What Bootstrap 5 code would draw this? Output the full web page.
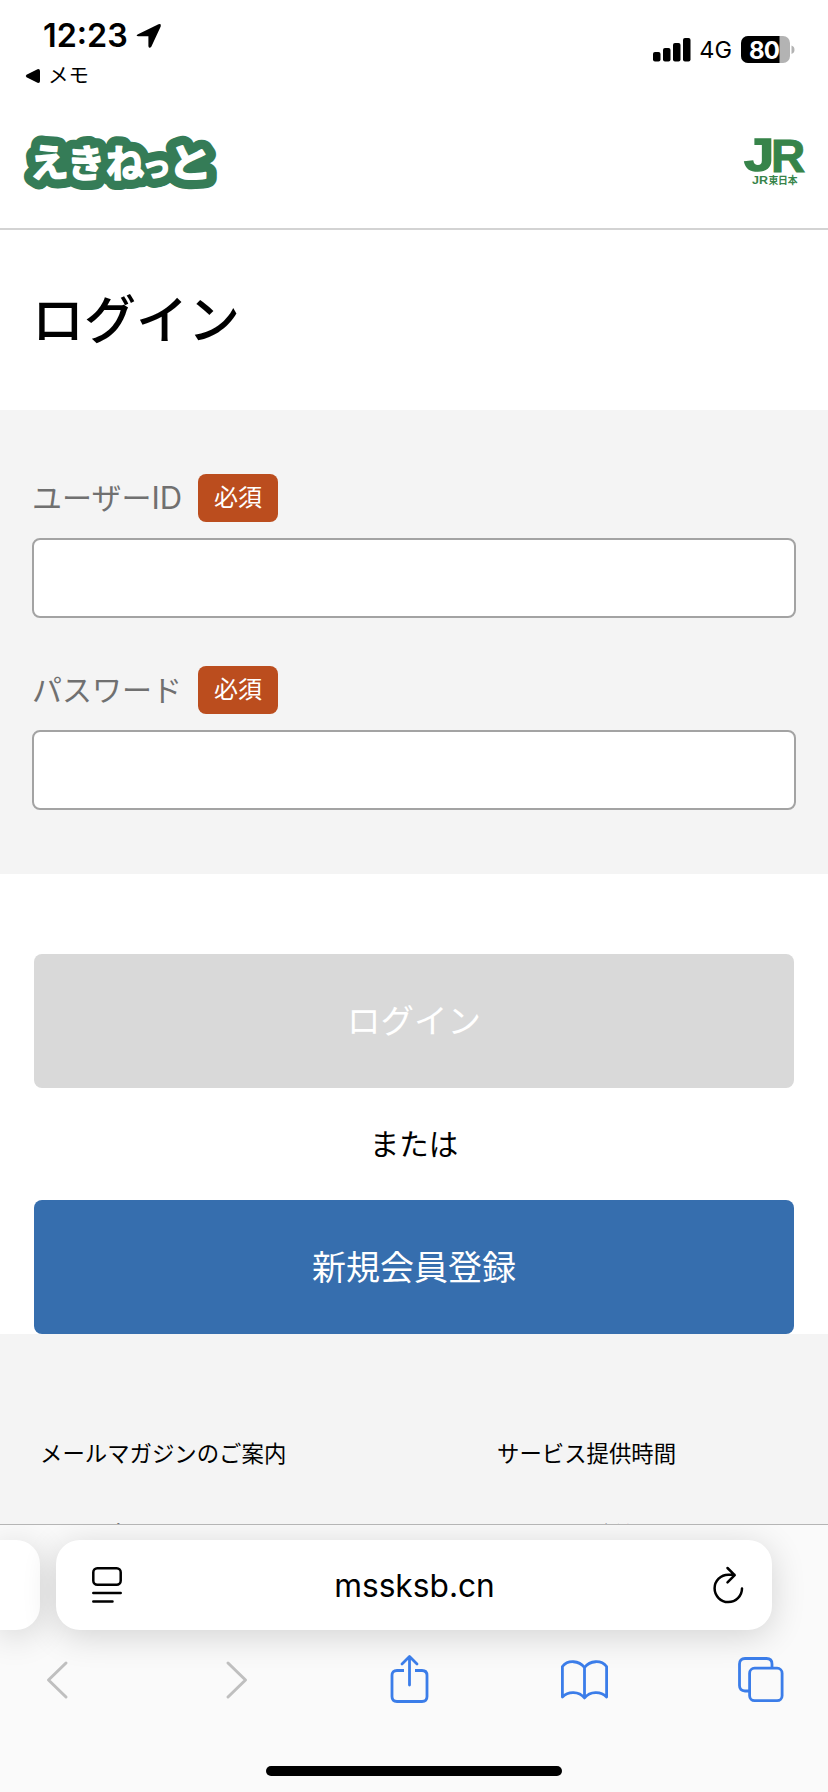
<!DOCTYPE html>
<html lang="ja">
<head>
<meta charset="utf-8">
<meta name="viewport" content="width=device-width, initial-scale=1">
<title>ログイン</title>
<link href="https://cdn.jsdelivr.net/npm/bootstrap@5.3.0/dist/css/bootstrap.min.css" rel="stylesheet">
<style>
body{font-family:"Noto Sans CJK JP",sans-serif;color:#000;background:#fff;height:1792px}
svg{display:block;flex:none;overflow:visible}
.latin{font-family:Inter,"Noto Sans CJK JP",sans-serif}
.status{height:98px;padding:19px 33px 0 25px}
.clock{font-size:32.3px;font-weight:600;line-height:34px;padding-left:18px}
.back-app{font-size:20.5px;line-height:24px;margin-top:11px;font-weight:400}
.signal{margin-top:17px;height:28px}
.net{font-size:23.5px;line-height:28px;margin-left:8px}
.site-head{height:132px;border-bottom:2px solid #d3d3d3;padding:0 23px}
.page-title{height:180px;padding:0 0 6px 32px;font-size:52px;line-height:1;font-weight:500}
.form-area{background:#f4f4f4;height:464px;padding:64px 32px 0}
.field-label{font-size:30px;line-height:45px;height:48px;width:149px;color:#707070;white-space:nowrap}
.field-label .latin{font-size:31px}
.need{width:80px;height:48px;border-radius:8px;background:#bb4d1e;color:#fff;font-size:24px;line-height:44px;font-weight:400;padding:0;margin-left:17px}
.form-control.entry{height:80px;border:2px solid #a3a3a3;border-radius:8px;margin:16px 0 48px;background:#fff}
.actions{padding:80px 34px 0}
.btn.wide{height:134px;border:0;border-radius:8px;font-size:34px;color:#fff;opacity:1;line-height:1;padding:0 0 3px}
.btn.login{background:#d9d9d9;font-size:33.5px;padding-bottom:5px}
.btn.join{background:#366eae}
.or-text{height:112px;font-size:29.5px;line-height:108px}
.foot{background:#f4f4f4;height:190px;padding:102px 0 0 40px;font-size:22.4px;line-height:32px;overflow:hidden}
.foot .cell-a{width:457px}
.foot .line{margin-bottom:49px}
.browser{height:268px;background:#fafafa;border-top:1px solid #b5b5b5;overflow:hidden}
.tabs{padding-top:15px;gap:16px}
.tab-prev,.tab-now{height:90px;background:#fff;box-shadow:0 6px 34px rgba(0,0,0,.16)}
.tab-prev{width:40px;border-radius:0 24px 24px 0}
.tab-now{width:716px;border-radius:24px;padding:0 27px 0 36px}
.url{font-size:31.7px;line-height:90px;padding:1px 4px 0 0;color:#000}
.tools{display:grid;grid-template-columns:180px 164px 170px 178px auto;padding:24px 0 0 46px;height:82px}
.home-bar{width:296px;height:10px;border-radius:5px;background:#000;margin:54px auto 0}
</style>
</head>
<body class="d-flex flex-column overflow-hidden">
<header class="status latin d-flex justify-content-between flex-shrink-0">
  <div>
    <div class="clock d-flex align-items-center"><span>12:23</span>
      <svg class="ms-2" width="26" height="26" viewBox="0 0 26 26"><path d="M2 11.300 22.500 1.300Q25.600.4 24.700 3.500L15.300 23.800Q13.200 26.200 12.400 23.200V13.300H2.400Q-.9 13.200 2 11.300Z"/></svg>
    </div>
    <div class="back-app d-flex align-items-center"><svg width="16" height="16" viewBox="0 0 16 16" style="margin-right:7px"><path d="M1.500 6.800 12.500 1.200Q15 .7 15 3V13Q15 15.300 12.500 14.800L1.500 9.200Q0 8 1.500 6.800Z"/></svg>メモ</div>
  </div>
  <div class="signal d-flex align-items-center">
    <svg width="38" height="24" viewBox="0 0 38 24"><rect x="0" y="14" width="7.500" height="9.500" rx="2"/><rect x="10" y="10" width="7.500" height="13.500" rx="2"/><rect x="20" y="5" width="7.500" height="18.500" rx="2"/><rect x="30" y="0" width="7.500" height="23.500" rx="2"/></svg>
    <span class="net">4G</span>
    <svg width="54" height="28" viewBox="0 0 54 28" style="margin-left:9px"><defs><clipPath id="bat"><rect width="49" height="27" rx="7"/></clipPath></defs><g clip-path="url(#bat)"><rect width="49" height="27" fill="#b3b3b3"/><rect width="38.500" height="27"/></g><path d="M50.500 9.500Q53.500 10.500 53.500 13.800T50.500 18Z" fill="#b3b3b3"/><text x="8" y="22.500" font-size="24" font-weight="700" fill="#fff" textLength="31">80</text></svg>
  </div>
</header>
<div class="site-head d-flex justify-content-between flex-shrink-0">
  <svg width="196" height="60" viewBox="0 0 196 60" style="margin-top:34px" role="img" aria-label="えきねっと" font-family="Noto Sans CJK JP" font-weight="700" stroke-linejoin="round">
    <g fill="#357c57" stroke="#357c57" stroke-width="20"><use href="#word"/></g>
    <g fill="#fff" stroke="#fff" stroke-width="1.600">
      <g id="word">
        <text font-size="39" transform="translate(7 45.500) rotate(-2)">え</text><text font-size="38" transform="translate(44 45)">き</text><text font-size="38" transform="translate(83 45)">ね</text><text font-size="29" transform="translate(119 45)">っ</text><text font-size="39" transform="translate(145 45) scale(1.130 1)">と</text>
      </g>
    </g>
  </svg>
  <svg width="61" height="50" viewBox="0 0 61 50" style="margin-top:39px" fill="#37844a" stroke="#37844a" font-family="Liberation Sans" font-weight="700">
    <text transform="translate(0 34.200) scale(1.180 1)" font-size="46" stroke-width="1.400">J</text>
    <text transform="translate(27 34.500) scale(1.030 1)" font-size="46" stroke-width="1">R</text>
    <text x="8" y="46.500" font-size="10.500" stroke="none" textLength="16" lengthAdjust="spacingAndGlyphs">JR</text><text x="24.500" y="46.500" font-size="9.800" stroke="none" font-family="Noto Sans CJK JP" textLength="29">東日本</text>
  </svg>
</div>
<main class="flex-shrink-0">
  <h1 class="page-title d-flex align-items-center mb-0">ログイン</h1>
  <section class="form-area">
    <div class="d-flex align-items-center"><label class="field-label" for="uid">ユーザー<span class="latin">ID</span></label><span class="badge need">必須</span></div>
    <input id="uid" class="form-control entry" type="text">
    <div class="d-flex align-items-center"><label class="field-label" for="pwd">パスワード</label><span class="badge need">必須</span></div>
    <input id="pwd" class="form-control entry" type="password">
  </section>
  <section class="actions">
    <button class="btn wide login w-100" disabled>ログイン</button>
    <div class="or-text text-center">または</div>
    <button class="btn wide join w-100 d-block">新規会員登録</button>
  </section>
  <section class="foot d-flex">
    <div class="cell-a"><div class="line">メールマガジンのご案内</div><div>お問い合わせ</div></div>
    <div><div class="line">サービス提供時間</div><div>よくあるご質問</div></div>
  </section>
</main>
<footer class="browser flex-shrink-0 latin">
  <div class="tabs d-flex">
    <div class="tab-prev"></div>
    <div class="tab-now d-flex align-items-center justify-content-between">
      <svg width="30" height="36" viewBox="0 0 30 36" fill="none" stroke="#000" stroke-width="2.500" stroke-linecap="round"><rect x="1.300" y="1.300" width="27.400" height="16.500" rx="4"/><path d="M1.300 26H28.700M1.300 34.500H20.500"/></svg>
      <span class="url">mssksb.cn</span>
      <svg width="34" height="38" viewBox="0 0 34 38" fill="none" stroke="#000" stroke-width="2.500" stroke-linecap="round" stroke-linejoin="round"><path d="M31 22.500A13.700 13.700 0 1 1 17.300 8.700H23.500M16.500 2 23.700 9.200 16.500 16.400"/></svg>
    </div>
  </div>
  <div class="tools">
    <svg width="22" height="38" viewBox="0 0 22 38" fill="none" stroke="#bfbfbf" stroke-width="3" stroke-linecap="round" stroke-linejoin="round" style="margin-top:7px"><path d="M20 2 2.500 19 20 36"/></svg>
    <svg width="22" height="38" viewBox="0 0 22 38" fill="none" stroke="#bfbfbf" stroke-width="3" stroke-linecap="round" stroke-linejoin="round" style="margin-top:7px"><path d="M2 2 19.500 19 2 36"/></svg>
    <svg width="40" height="50" viewBox="0 0 40 50" fill="none" stroke="#3b7de9" stroke-width="2.800" stroke-linecap="round" stroke-linejoin="round"><path d="M19.500 31V3M12 10 19.500 2.500 27 10"/><path stroke-linecap="butt" d="M14 16.500H7Q2 16.500 2 21.500V42.500Q2 47.500 7 47.500H32Q37 47.500 37 42.500V21.500Q37 16.500 32 16.500H25"/></svg>
    <svg width="50" height="42" viewBox="0 0 50 42" fill="none" stroke="#3b7de9" stroke-width="2.800" stroke-linejoin="round" style="margin-top:5px"><path d="M24.500 8.500C19 1.500 8 .5 2.400 7.500V38C8 32 19 32 24.500 39 30 32 41 32 46.600 38V7.500C41 .5 30 1.500 24.500 8.500V38"/></svg>
    <svg width="46" height="46" viewBox="0 0 46 46" fill="none" stroke="#3b7de9" stroke-width="2.800" style="margin-top:3px"><path d="M12 34H7Q1.500 34 1.500 28.500V7Q1.500 1.500 7 1.500H28.500Q34 1.500 34 7V11"/><rect x="11.600" y="11.200" width="32.500" height="32.500" rx="5"/></svg>
  </div>
  <div class="home-bar"></div>
</footer>
<script src="https://cdn.jsdelivr.net/npm/bootstrap@5.3.0/dist/js/bootstrap.bundle.min.js"></script>
</body>
</html>
